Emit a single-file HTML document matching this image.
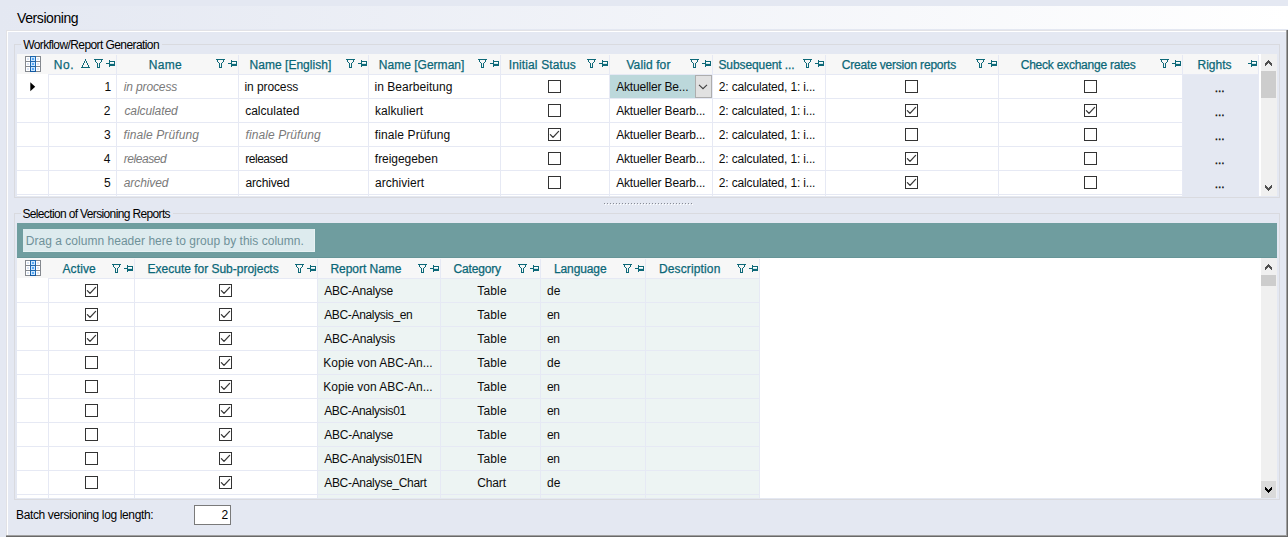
<!DOCTYPE html>
<html><head><meta charset="utf-8"><title>Versioning</title>
<style>
html,body{margin:0;padding:0;}
body{width:1288px;height:537px;overflow:hidden;background:#E4E8F2;position:relative;font-family:"Liberation Sans",sans-serif;}
div,svg.i,span.t{position:absolute;}
span.t{line-height:20px;white-space:pre;}
svg.i{display:block;overflow:visible;}
</style></head><body>
<div style="left:0px;top:6px;width:1288px;height:23px;background:linear-gradient(to right,#E4E8F2 0%,#FFFFFF 100%);"></div>
<div style="left:6px;top:30px;width:1280px;height:1px;background:#E2E2E6;"></div>
<div style="left:6px;top:30px;width:1px;height:506px;background:#E2E2E6;"></div>
<div style="left:7px;top:31px;width:1279px;height:1px;background:#FFFFFF;"></div>
<div style="left:7px;top:31px;width:1px;height:504px;background:#FFFFFF;"></div>
<div style="left:1286px;top:30px;width:1px;height:507px;background:#A0A0A0;"></div>
<div style="left:1287px;top:30px;width:1px;height:507px;background:#696969;"></div>
<div style="left:6px;top:535px;width:1281px;height:1px;background:#A0A0A0;"></div>
<div style="left:6px;top:536px;width:1282px;height:1px;background:#696969;"></div>
<div style="left:14px;top:44px;width:7px;height:1px;background:#D9DADF;"></div>
<div style="left:162px;top:44px;width:1118px;height:1px;background:#D9DADF;"></div>
<div style="left:14px;top:44px;width:1px;height:154px;background:#D9DADF;"></div>
<div style="left:1279px;top:44px;width:1px;height:154px;background:#D9DADF;"></div>
<div style="left:14px;top:197px;width:1266px;height:1px;background:#D9DADF;"></div>
<div style="left:14px;top:213px;width:7px;height:1px;background:#D9DADF;"></div>
<div style="left:173px;top:213px;width:1107px;height:1px;background:#D9DADF;"></div>
<div style="left:14px;top:213px;width:1px;height:287px;background:#D9DADF;"></div>
<div style="left:1279px;top:213px;width:1px;height:287px;background:#D9DADF;"></div>
<div style="left:14px;top:499px;width:1266px;height:1px;background:#D9DADF;"></div>
<div style="left:17px;top:54px;width:1244px;height:142px;background:#FFFFFF;"></div>
<div style="left:17px;top:54px;width:1241px;height:20px;background:#F7F7F7;"></div>
<div style="left:48px;top:74px;width:1210px;height:1px;background:#E6E9F4;"></div>
<div style="left:17px;top:98px;width:1241px;height:1px;background:#E6E9F4;"></div>
<div style="left:17px;top:122px;width:1241px;height:1px;background:#E6E9F4;"></div>
<div style="left:17px;top:146px;width:1241px;height:1px;background:#E6E9F4;"></div>
<div style="left:17px;top:170px;width:1241px;height:1px;background:#E6E9F4;"></div>
<div style="left:17px;top:194px;width:1241px;height:1px;background:#E6E9F4;"></div>
<div style="left:1183px;top:75px;width:76px;height:121px;background:#E4E8F2;"></div>
<div style="left:48px;top:75px;width:1px;height:121px;background:#E6E9F4;"></div>
<div style="left:116px;top:55px;width:1px;height:141px;background:#E6E9F4;"></div>
<div style="left:238px;top:55px;width:1px;height:141px;background:#E6E9F4;"></div>
<div style="left:368px;top:55px;width:1px;height:141px;background:#E6E9F4;"></div>
<div style="left:500px;top:55px;width:1px;height:141px;background:#E6E9F4;"></div>
<div style="left:609px;top:55px;width:1px;height:141px;background:#E6E9F4;"></div>
<div style="left:712px;top:55px;width:1px;height:141px;background:#E6E9F4;"></div>
<div style="left:825px;top:55px;width:1px;height:141px;background:#E6E9F4;"></div>
<div style="left:998px;top:55px;width:1px;height:141px;background:#E6E9F4;"></div>
<div style="left:1182px;top:55px;width:1px;height:141px;background:#E6E9F4;"></div>
<div style="left:1258px;top:55px;width:1px;height:141px;background:#E6E9F4;"></div>
<div style="left:610px;top:75px;width:85px;height:23px;background:#BCD8DB;"></div>
<div style="left:695px;top:75px;width:17px;height:23px;background:#E1E1E1;border:1px solid #ADADAD;box-sizing:border-box;"></div>
<svg class="i" style="left:698px;top:83px" width="10" height="7" viewBox="0 0 10 7"><polyline points="1,1.8 5,5.7 9,1.8" fill="none" stroke="#404040" stroke-width="1.1"/></svg>
<svg class="i" style="left:30px;top:82px" width="6" height="10" viewBox="0 0 6 10"><path d="M0.3 0.3L5.2 4.75L0.3 9.2z" fill="#000"/></svg>
<svg class="i" style="left:25px;top:56px" width="16" height="16" viewBox="0 0 16 16" shape-rendering="crispEdges"><rect x="0" y="0" width="16" height="16" fill="#fff"/><rect x="2" y="2" width="2" height="2" fill="#DCE6F5"/><rect x="2" y="7" width="2" height="2" fill="#DCE6F5"/><rect x="2" y="12" width="2" height="2" fill="#DCE6F5"/><rect x="12" y="2" width="2" height="2" fill="#DCE6F5"/><rect x="12" y="7" width="2" height="2" fill="#DCE6F5"/><rect x="12" y="12" width="2" height="2" fill="#DCE6F5"/><rect x="0" y="0" width="1" height="16" fill="#85898F"/><rect x="0" y="0" width="16" height="1" fill="#85898F"/><rect x="5" y="0" width="1" height="16" fill="#85898F"/><rect x="0" y="5" width="16" height="1" fill="#85898F"/><rect x="10" y="0" width="1" height="16" fill="#85898F"/><rect x="0" y="10" width="16" height="1" fill="#85898F"/><rect x="15" y="0" width="1" height="16" fill="#85898F"/><rect x="0" y="15" width="16" height="1" fill="#85898F"/><rect x="5" y="0" width="6" height="16" fill="#1B66AE"/><rect x="6" y="1" width="4" height="4" fill="#CDE6FD"/><rect x="7" y="2" width="2" height="2" fill="#5AAAF7"/><rect x="6" y="6" width="4" height="4" fill="#CDE6FD"/><rect x="7" y="7" width="2" height="2" fill="#5AAAF7"/><rect x="6" y="11" width="4" height="4" fill="#CDE6FD"/><rect x="7" y="12" width="2" height="2" fill="#5AAAF7"/><rect x="5" y="14" width="6" height="2" fill="#0E4F98" opacity=".6"/><rect x="6" y="11" width="4" height="4" fill="#CDE6FD"/><rect x="7" y="12" width="2" height="2" fill="#5AAAF7"/></svg>
<svg class="i" style="left:81px;top:59px" width="9" height="9" viewBox="0 0 9 9" shape-rendering="crispEdges"><path fill="#0D6878" d="M4 0h1v2h-1zM3 2h1v2h-1zM5 2h1v2h-1zM2 4h1v2h-1zM6 4h1v2h-1zM1 6h1v2h-1zM7 6h1v2h-1zM0 8h9v1h-9z"/></svg>
<svg class="i" style="left:94px;top:59px" width="9" height="9" viewBox="0 0 9 9" shape-rendering="crispEdges"><path fill="#0D6878" d="M0 0h9v1h-9zM1 1h1v2h-1zM7 1h1v2h-1zM2 3h1v1h-1zM6 3h1v1h-1zM3 4h1v5h-1zM5 4h1v5h-1zM4 8h1v1h-1z"/></svg>
<svg class="i" style="left:106px;top:60px" width="9" height="7" viewBox="0 0 9 7" shape-rendering="crispEdges"><path fill="#0D6878" d="M0 3h3v1h-3zM3 0h1v7h-1zM4 1h5v1h-5zM8 2h1v2h-1zM4 4h5v2h-5z"/><path fill="#FFFFFF" d="M4 2h4v1h-4z"/><path fill="#D2E9EC" d="M4 3h4v1h-4z"/></svg>
<svg class="i" style="left:216px;top:59px" width="9" height="9" viewBox="0 0 9 9" shape-rendering="crispEdges"><path fill="#0D6878" d="M0 0h9v1h-9zM1 1h1v2h-1zM7 1h1v2h-1zM2 3h1v1h-1zM6 3h1v1h-1zM3 4h1v5h-1zM5 4h1v5h-1zM4 8h1v1h-1z"/></svg>
<svg class="i" style="left:228px;top:60px" width="9" height="7" viewBox="0 0 9 7" shape-rendering="crispEdges"><path fill="#0D6878" d="M0 3h3v1h-3zM3 0h1v7h-1zM4 1h5v1h-5zM8 2h1v2h-1zM4 4h5v2h-5z"/><path fill="#FFFFFF" d="M4 2h4v1h-4z"/><path fill="#D2E9EC" d="M4 3h4v1h-4z"/></svg>
<svg class="i" style="left:346px;top:59px" width="9" height="9" viewBox="0 0 9 9" shape-rendering="crispEdges"><path fill="#0D6878" d="M0 0h9v1h-9zM1 1h1v2h-1zM7 1h1v2h-1zM2 3h1v1h-1zM6 3h1v1h-1zM3 4h1v5h-1zM5 4h1v5h-1zM4 8h1v1h-1z"/></svg>
<svg class="i" style="left:358px;top:60px" width="9" height="7" viewBox="0 0 9 7" shape-rendering="crispEdges"><path fill="#0D6878" d="M0 3h3v1h-3zM3 0h1v7h-1zM4 1h5v1h-5zM8 2h1v2h-1zM4 4h5v2h-5z"/><path fill="#FFFFFF" d="M4 2h4v1h-4z"/><path fill="#D2E9EC" d="M4 3h4v1h-4z"/></svg>
<svg class="i" style="left:478px;top:59px" width="9" height="9" viewBox="0 0 9 9" shape-rendering="crispEdges"><path fill="#0D6878" d="M0 0h9v1h-9zM1 1h1v2h-1zM7 1h1v2h-1zM2 3h1v1h-1zM6 3h1v1h-1zM3 4h1v5h-1zM5 4h1v5h-1zM4 8h1v1h-1z"/></svg>
<svg class="i" style="left:490px;top:60px" width="9" height="7" viewBox="0 0 9 7" shape-rendering="crispEdges"><path fill="#0D6878" d="M0 3h3v1h-3zM3 0h1v7h-1zM4 1h5v1h-5zM8 2h1v2h-1zM4 4h5v2h-5z"/><path fill="#FFFFFF" d="M4 2h4v1h-4z"/><path fill="#D2E9EC" d="M4 3h4v1h-4z"/></svg>
<svg class="i" style="left:587px;top:59px" width="9" height="9" viewBox="0 0 9 9" shape-rendering="crispEdges"><path fill="#0D6878" d="M0 0h9v1h-9zM1 1h1v2h-1zM7 1h1v2h-1zM2 3h1v1h-1zM6 3h1v1h-1zM3 4h1v5h-1zM5 4h1v5h-1zM4 8h1v1h-1z"/></svg>
<svg class="i" style="left:599px;top:60px" width="9" height="7" viewBox="0 0 9 7" shape-rendering="crispEdges"><path fill="#0D6878" d="M0 3h3v1h-3zM3 0h1v7h-1zM4 1h5v1h-5zM8 2h1v2h-1zM4 4h5v2h-5z"/><path fill="#FFFFFF" d="M4 2h4v1h-4z"/><path fill="#D2E9EC" d="M4 3h4v1h-4z"/></svg>
<svg class="i" style="left:690px;top:59px" width="9" height="9" viewBox="0 0 9 9" shape-rendering="crispEdges"><path fill="#0D6878" d="M0 0h9v1h-9zM1 1h1v2h-1zM7 1h1v2h-1zM2 3h1v1h-1zM6 3h1v1h-1zM3 4h1v5h-1zM5 4h1v5h-1zM4 8h1v1h-1z"/></svg>
<svg class="i" style="left:702px;top:60px" width="9" height="7" viewBox="0 0 9 7" shape-rendering="crispEdges"><path fill="#0D6878" d="M0 3h3v1h-3zM3 0h1v7h-1zM4 1h5v1h-5zM8 2h1v2h-1zM4 4h5v2h-5z"/><path fill="#FFFFFF" d="M4 2h4v1h-4z"/><path fill="#D2E9EC" d="M4 3h4v1h-4z"/></svg>
<svg class="i" style="left:803px;top:59px" width="9" height="9" viewBox="0 0 9 9" shape-rendering="crispEdges"><path fill="#0D6878" d="M0 0h9v1h-9zM1 1h1v2h-1zM7 1h1v2h-1zM2 3h1v1h-1zM6 3h1v1h-1zM3 4h1v5h-1zM5 4h1v5h-1zM4 8h1v1h-1z"/></svg>
<svg class="i" style="left:815px;top:60px" width="9" height="7" viewBox="0 0 9 7" shape-rendering="crispEdges"><path fill="#0D6878" d="M0 3h3v1h-3zM3 0h1v7h-1zM4 1h5v1h-5zM8 2h1v2h-1zM4 4h5v2h-5z"/><path fill="#FFFFFF" d="M4 2h4v1h-4z"/><path fill="#D2E9EC" d="M4 3h4v1h-4z"/></svg>
<svg class="i" style="left:976px;top:59px" width="9" height="9" viewBox="0 0 9 9" shape-rendering="crispEdges"><path fill="#0D6878" d="M0 0h9v1h-9zM1 1h1v2h-1zM7 1h1v2h-1zM2 3h1v1h-1zM6 3h1v1h-1zM3 4h1v5h-1zM5 4h1v5h-1zM4 8h1v1h-1z"/></svg>
<svg class="i" style="left:988px;top:60px" width="9" height="7" viewBox="0 0 9 7" shape-rendering="crispEdges"><path fill="#0D6878" d="M0 3h3v1h-3zM3 0h1v7h-1zM4 1h5v1h-5zM8 2h1v2h-1zM4 4h5v2h-5z"/><path fill="#FFFFFF" d="M4 2h4v1h-4z"/><path fill="#D2E9EC" d="M4 3h4v1h-4z"/></svg>
<svg class="i" style="left:1160px;top:59px" width="9" height="9" viewBox="0 0 9 9" shape-rendering="crispEdges"><path fill="#0D6878" d="M0 0h9v1h-9zM1 1h1v2h-1zM7 1h1v2h-1zM2 3h1v1h-1zM6 3h1v1h-1zM3 4h1v5h-1zM5 4h1v5h-1zM4 8h1v1h-1z"/></svg>
<svg class="i" style="left:1172px;top:60px" width="9" height="7" viewBox="0 0 9 7" shape-rendering="crispEdges"><path fill="#0D6878" d="M0 3h3v1h-3zM3 0h1v7h-1zM4 1h5v1h-5zM8 2h1v2h-1zM4 4h5v2h-5z"/><path fill="#FFFFFF" d="M4 2h4v1h-4z"/><path fill="#D2E9EC" d="M4 3h4v1h-4z"/></svg>
<svg class="i" style="left:1248px;top:60px" width="9" height="7" viewBox="0 0 9 7" shape-rendering="crispEdges"><path fill="#0D6878" d="M0 3h3v1h-3zM3 0h1v7h-1zM4 1h5v1h-5zM8 2h1v2h-1zM4 4h5v2h-5z"/><path fill="#FFFFFF" d="M4 2h4v1h-4z"/><path fill="#D2E9EC" d="M4 3h4v1h-4z"/></svg>
<svg class="i" style="left:548px;top:80px" width="13" height="13" viewBox="0 0 13 13"><rect x=".5" y=".5" width="12" height="12" fill="#fff" stroke="#333" stroke-width="1" shape-rendering="crispEdges"/></svg>
<svg class="i" style="left:905px;top:80px" width="13" height="13" viewBox="0 0 13 13"><rect x=".5" y=".5" width="12" height="12" fill="#fff" stroke="#333" stroke-width="1" shape-rendering="crispEdges"/></svg>
<svg class="i" style="left:1084px;top:80px" width="13" height="13" viewBox="0 0 13 13"><rect x=".5" y=".5" width="12" height="12" fill="#fff" stroke="#333" stroke-width="1" shape-rendering="crispEdges"/></svg>
<svg class="i" style="left:548px;top:104px" width="13" height="13" viewBox="0 0 13 13"><rect x=".5" y=".5" width="12" height="12" fill="#fff" stroke="#333" stroke-width="1" shape-rendering="crispEdges"/></svg>
<svg class="i" style="left:905px;top:104px" width="13" height="13" viewBox="0 0 13 13"><rect x=".5" y=".5" width="12" height="12" fill="#fff" stroke="#333" stroke-width="1" shape-rendering="crispEdges"/><polyline points="2.4,6.6 5,9.35 10.6,3.4" fill="none" stroke="#383838" stroke-width="1.3" stroke-linecap="round" stroke-linejoin="round"/></svg>
<svg class="i" style="left:1084px;top:104px" width="13" height="13" viewBox="0 0 13 13"><rect x=".5" y=".5" width="12" height="12" fill="#fff" stroke="#333" stroke-width="1" shape-rendering="crispEdges"/><polyline points="2.4,6.6 5,9.35 10.6,3.4" fill="none" stroke="#383838" stroke-width="1.3" stroke-linecap="round" stroke-linejoin="round"/></svg>
<svg class="i" style="left:548px;top:128px" width="13" height="13" viewBox="0 0 13 13"><rect x=".5" y=".5" width="12" height="12" fill="#fff" stroke="#333" stroke-width="1" shape-rendering="crispEdges"/><polyline points="2.4,6.6 5,9.35 10.6,3.4" fill="none" stroke="#383838" stroke-width="1.3" stroke-linecap="round" stroke-linejoin="round"/></svg>
<svg class="i" style="left:905px;top:128px" width="13" height="13" viewBox="0 0 13 13"><rect x=".5" y=".5" width="12" height="12" fill="#fff" stroke="#333" stroke-width="1" shape-rendering="crispEdges"/></svg>
<svg class="i" style="left:1084px;top:128px" width="13" height="13" viewBox="0 0 13 13"><rect x=".5" y=".5" width="12" height="12" fill="#fff" stroke="#333" stroke-width="1" shape-rendering="crispEdges"/></svg>
<svg class="i" style="left:548px;top:152px" width="13" height="13" viewBox="0 0 13 13"><rect x=".5" y=".5" width="12" height="12" fill="#fff" stroke="#333" stroke-width="1" shape-rendering="crispEdges"/></svg>
<svg class="i" style="left:905px;top:152px" width="13" height="13" viewBox="0 0 13 13"><rect x=".5" y=".5" width="12" height="12" fill="#fff" stroke="#333" stroke-width="1" shape-rendering="crispEdges"/><polyline points="2.4,6.6 5,9.35 10.6,3.4" fill="none" stroke="#383838" stroke-width="1.3" stroke-linecap="round" stroke-linejoin="round"/></svg>
<svg class="i" style="left:1084px;top:152px" width="13" height="13" viewBox="0 0 13 13"><rect x=".5" y=".5" width="12" height="12" fill="#fff" stroke="#333" stroke-width="1" shape-rendering="crispEdges"/></svg>
<svg class="i" style="left:548px;top:176px" width="13" height="13" viewBox="0 0 13 13"><rect x=".5" y=".5" width="12" height="12" fill="#fff" stroke="#333" stroke-width="1" shape-rendering="crispEdges"/></svg>
<svg class="i" style="left:905px;top:176px" width="13" height="13" viewBox="0 0 13 13"><rect x=".5" y=".5" width="12" height="12" fill="#fff" stroke="#333" stroke-width="1" shape-rendering="crispEdges"/><polyline points="2.4,6.6 5,9.35 10.6,3.4" fill="none" stroke="#383838" stroke-width="1.3" stroke-linecap="round" stroke-linejoin="round"/></svg>
<svg class="i" style="left:1084px;top:176px" width="13" height="13" viewBox="0 0 13 13"><rect x=".5" y=".5" width="12" height="12" fill="#fff" stroke="#333" stroke-width="1" shape-rendering="crispEdges"/></svg>
<div style="left:1261px;top:54px;width:16px;height:142px;background:#F0F0F0;"></div>
<div style="left:1261px;top:71px;width:15px;height:27px;background:#CDCDCD;"></div>
<svg class="i" style="left:1265px;top:60px" width="7" height="6" viewBox="0 0 7 6" shape-rendering="crispEdges"><path fill="#505050" d="M3 0h1v1h-1zM2 1h3v1h-3zM1 2h5v1h-5zM0 3h3v1h-3zM4 3h3v1h-3zM0 4h2v1h-2zM5 4h2v1h-2zM0 5h1v1h-1zM6 5h1v1h-1z"/></svg>
<svg class="i" style="left:1265px;top:185px" width="7" height="6" viewBox="0 0 7 6" shape-rendering="crispEdges"><path fill="#505050" d="M3 5h1v1h-1zM2 4h3v1h-3zM1 3h5v1h-5zM0 2h3v1h-3zM4 2h3v1h-3zM0 1h2v1h-2zM5 1h2v1h-2zM0 0h1v1h-1zM6 0h1v1h-1z"/></svg>
<div style="left:604px;top:203px;width:1px;height:1px;background:#8A8D96;"></div>
<div style="left:605px;top:204px;width:1px;height:1px;background:#FFFFFF;"></div>
<div style="left:607px;top:203px;width:1px;height:1px;background:#8A8D96;"></div>
<div style="left:608px;top:204px;width:1px;height:1px;background:#FFFFFF;"></div>
<div style="left:610px;top:203px;width:1px;height:1px;background:#8A8D96;"></div>
<div style="left:611px;top:204px;width:1px;height:1px;background:#FFFFFF;"></div>
<div style="left:613px;top:203px;width:1px;height:1px;background:#8A8D96;"></div>
<div style="left:614px;top:204px;width:1px;height:1px;background:#FFFFFF;"></div>
<div style="left:616px;top:203px;width:1px;height:1px;background:#8A8D96;"></div>
<div style="left:617px;top:204px;width:1px;height:1px;background:#FFFFFF;"></div>
<div style="left:619px;top:203px;width:1px;height:1px;background:#8A8D96;"></div>
<div style="left:620px;top:204px;width:1px;height:1px;background:#FFFFFF;"></div>
<div style="left:622px;top:203px;width:1px;height:1px;background:#8A8D96;"></div>
<div style="left:623px;top:204px;width:1px;height:1px;background:#FFFFFF;"></div>
<div style="left:625px;top:203px;width:1px;height:1px;background:#8A8D96;"></div>
<div style="left:626px;top:204px;width:1px;height:1px;background:#FFFFFF;"></div>
<div style="left:628px;top:203px;width:1px;height:1px;background:#8A8D96;"></div>
<div style="left:629px;top:204px;width:1px;height:1px;background:#FFFFFF;"></div>
<div style="left:631px;top:203px;width:1px;height:1px;background:#8A8D96;"></div>
<div style="left:632px;top:204px;width:1px;height:1px;background:#FFFFFF;"></div>
<div style="left:634px;top:203px;width:1px;height:1px;background:#8A8D96;"></div>
<div style="left:635px;top:204px;width:1px;height:1px;background:#FFFFFF;"></div>
<div style="left:637px;top:203px;width:1px;height:1px;background:#8A8D96;"></div>
<div style="left:638px;top:204px;width:1px;height:1px;background:#FFFFFF;"></div>
<div style="left:640px;top:203px;width:1px;height:1px;background:#8A8D96;"></div>
<div style="left:641px;top:204px;width:1px;height:1px;background:#FFFFFF;"></div>
<div style="left:643px;top:203px;width:1px;height:1px;background:#8A8D96;"></div>
<div style="left:644px;top:204px;width:1px;height:1px;background:#FFFFFF;"></div>
<div style="left:646px;top:203px;width:1px;height:1px;background:#8A8D96;"></div>
<div style="left:647px;top:204px;width:1px;height:1px;background:#FFFFFF;"></div>
<div style="left:649px;top:203px;width:1px;height:1px;background:#8A8D96;"></div>
<div style="left:650px;top:204px;width:1px;height:1px;background:#FFFFFF;"></div>
<div style="left:652px;top:203px;width:1px;height:1px;background:#8A8D96;"></div>
<div style="left:653px;top:204px;width:1px;height:1px;background:#FFFFFF;"></div>
<div style="left:655px;top:203px;width:1px;height:1px;background:#8A8D96;"></div>
<div style="left:656px;top:204px;width:1px;height:1px;background:#FFFFFF;"></div>
<div style="left:658px;top:203px;width:1px;height:1px;background:#8A8D96;"></div>
<div style="left:659px;top:204px;width:1px;height:1px;background:#FFFFFF;"></div>
<div style="left:661px;top:203px;width:1px;height:1px;background:#8A8D96;"></div>
<div style="left:662px;top:204px;width:1px;height:1px;background:#FFFFFF;"></div>
<div style="left:664px;top:203px;width:1px;height:1px;background:#8A8D96;"></div>
<div style="left:665px;top:204px;width:1px;height:1px;background:#FFFFFF;"></div>
<div style="left:667px;top:203px;width:1px;height:1px;background:#8A8D96;"></div>
<div style="left:668px;top:204px;width:1px;height:1px;background:#FFFFFF;"></div>
<div style="left:670px;top:203px;width:1px;height:1px;background:#8A8D96;"></div>
<div style="left:671px;top:204px;width:1px;height:1px;background:#FFFFFF;"></div>
<div style="left:673px;top:203px;width:1px;height:1px;background:#8A8D96;"></div>
<div style="left:674px;top:204px;width:1px;height:1px;background:#FFFFFF;"></div>
<div style="left:676px;top:203px;width:1px;height:1px;background:#8A8D96;"></div>
<div style="left:677px;top:204px;width:1px;height:1px;background:#FFFFFF;"></div>
<div style="left:679px;top:203px;width:1px;height:1px;background:#8A8D96;"></div>
<div style="left:680px;top:204px;width:1px;height:1px;background:#FFFFFF;"></div>
<div style="left:682px;top:203px;width:1px;height:1px;background:#8A8D96;"></div>
<div style="left:683px;top:204px;width:1px;height:1px;background:#FFFFFF;"></div>
<div style="left:685px;top:203px;width:1px;height:1px;background:#8A8D96;"></div>
<div style="left:686px;top:204px;width:1px;height:1px;background:#FFFFFF;"></div>
<div style="left:688px;top:203px;width:1px;height:1px;background:#8A8D96;"></div>
<div style="left:689px;top:204px;width:1px;height:1px;background:#FFFFFF;"></div>
<div style="left:691px;top:203px;width:1px;height:1px;background:#8A8D96;"></div>
<div style="left:692px;top:204px;width:1px;height:1px;background:#FFFFFF;"></div>
<div style="left:17px;top:223px;width:1260px;height:35px;background:#6F9D9F;"></div>
<div style="left:17px;top:257px;width:1260px;height:1px;background:#669597;"></div>
<div style="left:23px;top:229px;width:292px;height:23px;background:#DDEBEE;border-right:1px solid #E8F2F3;border-bottom:1px solid #E8F2F3;box-sizing:border-box;"></div>
<div style="left:17px;top:258px;width:1244px;height:240px;background:#FFFFFF;"></div>
<div style="left:17px;top:258px;width:743px;height:20px;background:#F7F7F7;"></div>
<div style="left:318px;top:279px;width:441px;height:219px;background:#EDF4F3;"></div>
<div style="left:48px;top:278px;width:712px;height:1px;background:#E6E9F4;"></div>
<div style="left:17px;top:302px;width:743px;height:1px;background:#E6E9F4;"></div>
<div style="left:17px;top:326px;width:743px;height:1px;background:#E6E9F4;"></div>
<div style="left:17px;top:350px;width:743px;height:1px;background:#E6E9F4;"></div>
<div style="left:17px;top:374px;width:743px;height:1px;background:#E6E9F4;"></div>
<div style="left:17px;top:398px;width:743px;height:1px;background:#E6E9F4;"></div>
<div style="left:17px;top:422px;width:743px;height:1px;background:#E6E9F4;"></div>
<div style="left:17px;top:446px;width:743px;height:1px;background:#E6E9F4;"></div>
<div style="left:17px;top:470px;width:743px;height:1px;background:#E6E9F4;"></div>
<div style="left:17px;top:494px;width:743px;height:1px;background:#E6E9F4;"></div>
<div style="left:48px;top:279px;width:1px;height:219px;background:#E6E9F4;"></div>
<div style="left:134px;top:259px;width:1px;height:239px;background:#E6E9F4;"></div>
<div style="left:317px;top:259px;width:1px;height:239px;background:#E6E9F4;"></div>
<div style="left:440px;top:259px;width:1px;height:239px;background:#E6E9F4;"></div>
<div style="left:540px;top:259px;width:1px;height:239px;background:#E6E9F4;"></div>
<div style="left:645px;top:259px;width:1px;height:239px;background:#E6E9F4;"></div>
<div style="left:759px;top:259px;width:1px;height:239px;background:#E6E9F4;"></div>
<svg class="i" style="left:25px;top:260px" width="16" height="16" viewBox="0 0 16 16" shape-rendering="crispEdges"><rect x="0" y="0" width="16" height="16" fill="#fff"/><rect x="2" y="2" width="2" height="2" fill="#DCE6F5"/><rect x="2" y="7" width="2" height="2" fill="#DCE6F5"/><rect x="2" y="12" width="2" height="2" fill="#DCE6F5"/><rect x="12" y="2" width="2" height="2" fill="#DCE6F5"/><rect x="12" y="7" width="2" height="2" fill="#DCE6F5"/><rect x="12" y="12" width="2" height="2" fill="#DCE6F5"/><rect x="0" y="0" width="1" height="16" fill="#85898F"/><rect x="0" y="0" width="16" height="1" fill="#85898F"/><rect x="5" y="0" width="1" height="16" fill="#85898F"/><rect x="0" y="5" width="16" height="1" fill="#85898F"/><rect x="10" y="0" width="1" height="16" fill="#85898F"/><rect x="0" y="10" width="16" height="1" fill="#85898F"/><rect x="15" y="0" width="1" height="16" fill="#85898F"/><rect x="0" y="15" width="16" height="1" fill="#85898F"/><rect x="5" y="0" width="6" height="16" fill="#1B66AE"/><rect x="6" y="1" width="4" height="4" fill="#CDE6FD"/><rect x="7" y="2" width="2" height="2" fill="#5AAAF7"/><rect x="6" y="6" width="4" height="4" fill="#CDE6FD"/><rect x="7" y="7" width="2" height="2" fill="#5AAAF7"/><rect x="6" y="11" width="4" height="4" fill="#CDE6FD"/><rect x="7" y="12" width="2" height="2" fill="#5AAAF7"/><rect x="5" y="14" width="6" height="2" fill="#0E4F98" opacity=".6"/><rect x="6" y="11" width="4" height="4" fill="#CDE6FD"/><rect x="7" y="12" width="2" height="2" fill="#5AAAF7"/></svg>
<svg class="i" style="left:112px;top:264px" width="9" height="9" viewBox="0 0 9 9" shape-rendering="crispEdges"><path fill="#0D6878" d="M0 0h9v1h-9zM1 1h1v2h-1zM7 1h1v2h-1zM2 3h1v1h-1zM6 3h1v1h-1zM3 4h1v5h-1zM5 4h1v5h-1zM4 8h1v1h-1z"/></svg>
<svg class="i" style="left:124px;top:265px" width="9" height="7" viewBox="0 0 9 7" shape-rendering="crispEdges"><path fill="#0D6878" d="M0 3h3v1h-3zM3 0h1v7h-1zM4 1h5v1h-5zM8 2h1v2h-1zM4 4h5v2h-5z"/><path fill="#FFFFFF" d="M4 2h4v1h-4z"/><path fill="#D2E9EC" d="M4 3h4v1h-4z"/></svg>
<svg class="i" style="left:295px;top:264px" width="9" height="9" viewBox="0 0 9 9" shape-rendering="crispEdges"><path fill="#0D6878" d="M0 0h9v1h-9zM1 1h1v2h-1zM7 1h1v2h-1zM2 3h1v1h-1zM6 3h1v1h-1zM3 4h1v5h-1zM5 4h1v5h-1zM4 8h1v1h-1z"/></svg>
<svg class="i" style="left:307px;top:265px" width="9" height="7" viewBox="0 0 9 7" shape-rendering="crispEdges"><path fill="#0D6878" d="M0 3h3v1h-3zM3 0h1v7h-1zM4 1h5v1h-5zM8 2h1v2h-1zM4 4h5v2h-5z"/><path fill="#FFFFFF" d="M4 2h4v1h-4z"/><path fill="#D2E9EC" d="M4 3h4v1h-4z"/></svg>
<svg class="i" style="left:418px;top:264px" width="9" height="9" viewBox="0 0 9 9" shape-rendering="crispEdges"><path fill="#0D6878" d="M0 0h9v1h-9zM1 1h1v2h-1zM7 1h1v2h-1zM2 3h1v1h-1zM6 3h1v1h-1zM3 4h1v5h-1zM5 4h1v5h-1zM4 8h1v1h-1z"/></svg>
<svg class="i" style="left:430px;top:265px" width="9" height="7" viewBox="0 0 9 7" shape-rendering="crispEdges"><path fill="#0D6878" d="M0 3h3v1h-3zM3 0h1v7h-1zM4 1h5v1h-5zM8 2h1v2h-1zM4 4h5v2h-5z"/><path fill="#FFFFFF" d="M4 2h4v1h-4z"/><path fill="#D2E9EC" d="M4 3h4v1h-4z"/></svg>
<svg class="i" style="left:518px;top:264px" width="9" height="9" viewBox="0 0 9 9" shape-rendering="crispEdges"><path fill="#0D6878" d="M0 0h9v1h-9zM1 1h1v2h-1zM7 1h1v2h-1zM2 3h1v1h-1zM6 3h1v1h-1zM3 4h1v5h-1zM5 4h1v5h-1zM4 8h1v1h-1z"/></svg>
<svg class="i" style="left:530px;top:265px" width="9" height="7" viewBox="0 0 9 7" shape-rendering="crispEdges"><path fill="#0D6878" d="M0 3h3v1h-3zM3 0h1v7h-1zM4 1h5v1h-5zM8 2h1v2h-1zM4 4h5v2h-5z"/><path fill="#FFFFFF" d="M4 2h4v1h-4z"/><path fill="#D2E9EC" d="M4 3h4v1h-4z"/></svg>
<svg class="i" style="left:623px;top:264px" width="9" height="9" viewBox="0 0 9 9" shape-rendering="crispEdges"><path fill="#0D6878" d="M0 0h9v1h-9zM1 1h1v2h-1zM7 1h1v2h-1zM2 3h1v1h-1zM6 3h1v1h-1zM3 4h1v5h-1zM5 4h1v5h-1zM4 8h1v1h-1z"/></svg>
<svg class="i" style="left:635px;top:265px" width="9" height="7" viewBox="0 0 9 7" shape-rendering="crispEdges"><path fill="#0D6878" d="M0 3h3v1h-3zM3 0h1v7h-1zM4 1h5v1h-5zM8 2h1v2h-1zM4 4h5v2h-5z"/><path fill="#FFFFFF" d="M4 2h4v1h-4z"/><path fill="#D2E9EC" d="M4 3h4v1h-4z"/></svg>
<svg class="i" style="left:737px;top:264px" width="9" height="9" viewBox="0 0 9 9" shape-rendering="crispEdges"><path fill="#0D6878" d="M0 0h9v1h-9zM1 1h1v2h-1zM7 1h1v2h-1zM2 3h1v1h-1zM6 3h1v1h-1zM3 4h1v5h-1zM5 4h1v5h-1zM4 8h1v1h-1z"/></svg>
<svg class="i" style="left:749px;top:265px" width="9" height="7" viewBox="0 0 9 7" shape-rendering="crispEdges"><path fill="#0D6878" d="M0 3h3v1h-3zM3 0h1v7h-1zM4 1h5v1h-5zM8 2h1v2h-1zM4 4h5v2h-5z"/><path fill="#FFFFFF" d="M4 2h4v1h-4z"/><path fill="#D2E9EC" d="M4 3h4v1h-4z"/></svg>
<svg class="i" style="left:85px;top:284px" width="13" height="13" viewBox="0 0 13 13"><rect x=".5" y=".5" width="12" height="12" fill="#fff" stroke="#333" stroke-width="1" shape-rendering="crispEdges"/><polyline points="2.4,6.6 5,9.35 10.6,3.4" fill="none" stroke="#383838" stroke-width="1.3" stroke-linecap="round" stroke-linejoin="round"/></svg>
<svg class="i" style="left:219px;top:284px" width="13" height="13" viewBox="0 0 13 13"><rect x=".5" y=".5" width="12" height="12" fill="#fff" stroke="#333" stroke-width="1" shape-rendering="crispEdges"/><polyline points="2.4,6.6 5,9.35 10.6,3.4" fill="none" stroke="#383838" stroke-width="1.3" stroke-linecap="round" stroke-linejoin="round"/></svg>
<svg class="i" style="left:85px;top:308px" width="13" height="13" viewBox="0 0 13 13"><rect x=".5" y=".5" width="12" height="12" fill="#fff" stroke="#333" stroke-width="1" shape-rendering="crispEdges"/><polyline points="2.4,6.6 5,9.35 10.6,3.4" fill="none" stroke="#383838" stroke-width="1.3" stroke-linecap="round" stroke-linejoin="round"/></svg>
<svg class="i" style="left:219px;top:308px" width="13" height="13" viewBox="0 0 13 13"><rect x=".5" y=".5" width="12" height="12" fill="#fff" stroke="#333" stroke-width="1" shape-rendering="crispEdges"/><polyline points="2.4,6.6 5,9.35 10.6,3.4" fill="none" stroke="#383838" stroke-width="1.3" stroke-linecap="round" stroke-linejoin="round"/></svg>
<svg class="i" style="left:85px;top:332px" width="13" height="13" viewBox="0 0 13 13"><rect x=".5" y=".5" width="12" height="12" fill="#fff" stroke="#333" stroke-width="1" shape-rendering="crispEdges"/><polyline points="2.4,6.6 5,9.35 10.6,3.4" fill="none" stroke="#383838" stroke-width="1.3" stroke-linecap="round" stroke-linejoin="round"/></svg>
<svg class="i" style="left:219px;top:332px" width="13" height="13" viewBox="0 0 13 13"><rect x=".5" y=".5" width="12" height="12" fill="#fff" stroke="#333" stroke-width="1" shape-rendering="crispEdges"/><polyline points="2.4,6.6 5,9.35 10.6,3.4" fill="none" stroke="#383838" stroke-width="1.3" stroke-linecap="round" stroke-linejoin="round"/></svg>
<svg class="i" style="left:85px;top:356px" width="13" height="13" viewBox="0 0 13 13"><rect x=".5" y=".5" width="12" height="12" fill="#fff" stroke="#333" stroke-width="1" shape-rendering="crispEdges"/></svg>
<svg class="i" style="left:219px;top:356px" width="13" height="13" viewBox="0 0 13 13"><rect x=".5" y=".5" width="12" height="12" fill="#fff" stroke="#333" stroke-width="1" shape-rendering="crispEdges"/><polyline points="2.4,6.6 5,9.35 10.6,3.4" fill="none" stroke="#383838" stroke-width="1.3" stroke-linecap="round" stroke-linejoin="round"/></svg>
<svg class="i" style="left:85px;top:380px" width="13" height="13" viewBox="0 0 13 13"><rect x=".5" y=".5" width="12" height="12" fill="#fff" stroke="#333" stroke-width="1" shape-rendering="crispEdges"/></svg>
<svg class="i" style="left:219px;top:380px" width="13" height="13" viewBox="0 0 13 13"><rect x=".5" y=".5" width="12" height="12" fill="#fff" stroke="#333" stroke-width="1" shape-rendering="crispEdges"/><polyline points="2.4,6.6 5,9.35 10.6,3.4" fill="none" stroke="#383838" stroke-width="1.3" stroke-linecap="round" stroke-linejoin="round"/></svg>
<svg class="i" style="left:85px;top:404px" width="13" height="13" viewBox="0 0 13 13"><rect x=".5" y=".5" width="12" height="12" fill="#fff" stroke="#333" stroke-width="1" shape-rendering="crispEdges"/></svg>
<svg class="i" style="left:219px;top:404px" width="13" height="13" viewBox="0 0 13 13"><rect x=".5" y=".5" width="12" height="12" fill="#fff" stroke="#333" stroke-width="1" shape-rendering="crispEdges"/><polyline points="2.4,6.6 5,9.35 10.6,3.4" fill="none" stroke="#383838" stroke-width="1.3" stroke-linecap="round" stroke-linejoin="round"/></svg>
<svg class="i" style="left:85px;top:428px" width="13" height="13" viewBox="0 0 13 13"><rect x=".5" y=".5" width="12" height="12" fill="#fff" stroke="#333" stroke-width="1" shape-rendering="crispEdges"/></svg>
<svg class="i" style="left:219px;top:428px" width="13" height="13" viewBox="0 0 13 13"><rect x=".5" y=".5" width="12" height="12" fill="#fff" stroke="#333" stroke-width="1" shape-rendering="crispEdges"/><polyline points="2.4,6.6 5,9.35 10.6,3.4" fill="none" stroke="#383838" stroke-width="1.3" stroke-linecap="round" stroke-linejoin="round"/></svg>
<svg class="i" style="left:85px;top:452px" width="13" height="13" viewBox="0 0 13 13"><rect x=".5" y=".5" width="12" height="12" fill="#fff" stroke="#333" stroke-width="1" shape-rendering="crispEdges"/></svg>
<svg class="i" style="left:219px;top:452px" width="13" height="13" viewBox="0 0 13 13"><rect x=".5" y=".5" width="12" height="12" fill="#fff" stroke="#333" stroke-width="1" shape-rendering="crispEdges"/><polyline points="2.4,6.6 5,9.35 10.6,3.4" fill="none" stroke="#383838" stroke-width="1.3" stroke-linecap="round" stroke-linejoin="round"/></svg>
<svg class="i" style="left:85px;top:476px" width="13" height="13" viewBox="0 0 13 13"><rect x=".5" y=".5" width="12" height="12" fill="#fff" stroke="#333" stroke-width="1" shape-rendering="crispEdges"/></svg>
<svg class="i" style="left:219px;top:476px" width="13" height="13" viewBox="0 0 13 13"><rect x=".5" y=".5" width="12" height="12" fill="#fff" stroke="#333" stroke-width="1" shape-rendering="crispEdges"/><polyline points="2.4,6.6 5,9.35 10.6,3.4" fill="none" stroke="#383838" stroke-width="1.3" stroke-linecap="round" stroke-linejoin="round"/></svg>
<div style="left:1261px;top:258px;width:16px;height:240px;background:#F0F0F0;"></div>
<div style="left:1261px;top:275px;width:15px;height:11px;background:#CDCDCD;"></div>
<svg class="i" style="left:1265px;top:264px" width="7" height="6" viewBox="0 0 7 6" shape-rendering="crispEdges"><path fill="#505050" d="M3 0h1v1h-1zM2 1h3v1h-3zM1 2h5v1h-5zM0 3h3v1h-3zM4 3h3v1h-3zM0 4h2v1h-2zM5 4h2v1h-2zM0 5h1v1h-1zM6 5h1v1h-1z"/></svg>
<div style="left:1261px;top:481px;width:15px;height:17px;background:#DADADA;"></div>
<svg class="i" style="left:1265px;top:487px" width="7" height="6" viewBox="0 0 7 6" shape-rendering="crispEdges"><path fill="#000000" d="M3 5h1v1h-1zM2 4h3v1h-3zM1 3h5v1h-5zM0 2h3v1h-3zM4 2h3v1h-3zM0 1h2v1h-2zM5 1h2v1h-2zM0 0h1v1h-1zM6 0h1v1h-1z"/></svg>
<div style="left:194px;top:505px;width:37px;height:20px;background:#FFFFFF;border:1px solid #7A7A7A;box-sizing:border-box;"></div>
<span class="t" style="left:17.08px;top:8px;font-size:14px;color:#000000;letter-spacing:-0.429px;">Versioning</span>
<span class="t" style="left:23.13px;top:35px;font-size:12px;color:#000000;letter-spacing:-0.590px;">Workflow/Report Generation</span>
<span class="t" style="left:22.40px;top:204px;font-size:12px;color:#000000;letter-spacing:-0.640px;">Selection of Versioning Reports</span>
<span class="t" style="left:16.00px;top:505px;font-size:12px;color:#000000;letter-spacing:-0.364px;">Batch versioning log length:</span>
<span class="t" style="left:221.45px;top:505px;font-size:12px;color:#000000;">2</span>
<span class="t" style="left:53.80px;top:55px;font-size:12px;color:#0B6777;letter-spacing:0.600px;-webkit-text-stroke:0.25px #0B6777;">No.</span>
<span class="t" style="left:148.75px;top:55px;font-size:12px;color:#0B6777;letter-spacing:0.308px;-webkit-text-stroke:0.25px #0B6777;">Name</span>
<span class="t" style="left:249.60px;top:55px;font-size:12px;color:#0B6777;letter-spacing:0.019px;-webkit-text-stroke:0.25px #0B6777;">Name [English]</span>
<span class="t" style="left:378.75px;top:55px;font-size:12px;color:#0B6777;letter-spacing:0.021px;-webkit-text-stroke:0.25px #0B6777;">Name [German]</span>
<span class="t" style="left:508.72px;top:55px;font-size:12px;color:#0B6777;letter-spacing:0.133px;-webkit-text-stroke:0.25px #0B6777;">Initial Status</span>
<span class="t" style="left:626.38px;top:55px;font-size:12px;color:#0B6777;letter-spacing:0.109px;-webkit-text-stroke:0.25px #0B6777;">Valid for</span>
<span class="t" style="left:718.40px;top:55px;font-size:12px;color:#0B6777;letter-spacing:-0.083px;-webkit-text-stroke:0.25px #0B6777;">Subsequent ...</span>
<span class="t" style="left:841.84px;top:55px;font-size:12px;color:#0B6777;letter-spacing:-0.205px;-webkit-text-stroke:0.25px #0B6777;">Create version reports</span>
<span class="t" style="left:1020.74px;top:55px;font-size:12px;color:#0B6777;letter-spacing:-0.234px;-webkit-text-stroke:0.25px #0B6777;">Check exchange rates</span>
<span class="t" style="left:1197.50px;top:55px;font-size:12px;color:#0B6777;letter-spacing:-0.009px;-webkit-text-stroke:0.25px #0B6777;">Rights</span>
<span class="t" style="left:104.40px;top:77px;font-size:12px;color:#0C0C0C;">1</span>
<span class="t" style="left:123.83px;top:77px;font-size:12px;color:#7A7A7A;letter-spacing:-0.143px;font-style:italic;">in process</span>
<span class="t" style="left:244.55px;top:77px;font-size:12px;color:#0C0C0C;letter-spacing:-0.101px;">in process</span>
<span class="t" style="left:374.55px;top:77px;font-size:12px;color:#0C0C0C;letter-spacing:0.037px;">in Bearbeitung</span>
<span class="t" style="left:616.13px;top:77px;font-size:12px;color:#0C0C0C;letter-spacing:-0.166px;">Aktueller Be...</span>
<span class="t" style="left:718.85px;top:77px;font-size:12px;color:#0C0C0C;letter-spacing:-0.164px;">2: calculated, 1: i...</span>
<span class="t" style="left:1214.87px;top:78px;font-size:12px;color:#0C0C0C;letter-spacing:-0.137px;-webkit-text-stroke:0.3px #0C0C0C;">...</span>
<span class="t" style="left:103.85px;top:101px;font-size:12px;color:#0C0C0C;">2</span>
<span class="t" style="left:124.43px;top:101px;font-size:12px;color:#7A7A7A;letter-spacing:-0.088px;font-style:italic;">calculated</span>
<span class="t" style="left:245.15px;top:101px;font-size:12px;color:#0C0C0C;letter-spacing:0.030px;">calculated</span>
<span class="t" style="left:374.90px;top:101px;font-size:12px;color:#0C0C0C;letter-spacing:0.093px;">kalkuliert</span>
<span class="t" style="left:616.13px;top:101px;font-size:12px;color:#0C0C0C;letter-spacing:-0.161px;">Aktueller Bearb...</span>
<span class="t" style="left:718.85px;top:101px;font-size:12px;color:#0C0C0C;letter-spacing:-0.164px;">2: calculated, 1: i...</span>
<span class="t" style="left:1214.87px;top:102px;font-size:12px;color:#0C0C0C;letter-spacing:-0.137px;-webkit-text-stroke:0.3px #0C0C0C;">...</span>
<span class="t" style="left:104.01px;top:125px;font-size:12px;color:#0C0C0C;">3</span>
<span class="t" style="left:123.61px;top:125px;font-size:12px;color:#7A7A7A;letter-spacing:0.092px;font-style:italic;">finale Prüfung</span>
<span class="t" style="left:245.51px;top:125px;font-size:12px;color:#7A7A7A;letter-spacing:0.092px;font-style:italic;">finale Prüfung</span>
<span class="t" style="left:374.87px;top:125px;font-size:12px;color:#0C0C0C;letter-spacing:0.100px;">finale Prüfung</span>
<span class="t" style="left:616.13px;top:125px;font-size:12px;color:#0C0C0C;letter-spacing:-0.161px;">Aktueller Bearb...</span>
<span class="t" style="left:718.85px;top:125px;font-size:12px;color:#0C0C0C;letter-spacing:-0.164px;">2: calculated, 1: i...</span>
<span class="t" style="left:1214.87px;top:126px;font-size:12px;color:#0C0C0C;letter-spacing:-0.137px;-webkit-text-stroke:0.3px #0C0C0C;">...</span>
<span class="t" style="left:103.85px;top:149px;font-size:12px;color:#0C0C0C;">4</span>
<span class="t" style="left:123.80px;top:149px;font-size:12px;color:#7A7A7A;letter-spacing:-0.436px;font-style:italic;">released</span>
<span class="t" style="left:245.20px;top:149px;font-size:12px;color:#0C0C0C;letter-spacing:-0.461px;">released</span>
<span class="t" style="left:374.87px;top:149px;font-size:12px;color:#0C0C0C;letter-spacing:-0.044px;">freigegeben</span>
<span class="t" style="left:616.13px;top:149px;font-size:12px;color:#0C0C0C;letter-spacing:-0.161px;">Aktueller Bearb...</span>
<span class="t" style="left:718.85px;top:149px;font-size:12px;color:#0C0C0C;letter-spacing:-0.164px;">2: calculated, 1: i...</span>
<span class="t" style="left:1214.87px;top:150px;font-size:12px;color:#0C0C0C;letter-spacing:-0.137px;-webkit-text-stroke:0.3px #0C0C0C;">...</span>
<span class="t" style="left:104.05px;top:173px;font-size:12px;color:#0C0C0C;">5</span>
<span class="t" style="left:123.80px;top:173px;font-size:12px;color:#7A7A7A;letter-spacing:-0.096px;font-style:italic;">archived</span>
<span class="t" style="left:245.42px;top:173px;font-size:12px;color:#0C0C0C;letter-spacing:-0.141px;">archived</span>
<span class="t" style="left:375.02px;top:173px;font-size:12px;color:#0C0C0C;letter-spacing:0.040px;">archiviert</span>
<span class="t" style="left:616.13px;top:173px;font-size:12px;color:#0C0C0C;letter-spacing:-0.161px;">Aktueller Bearb...</span>
<span class="t" style="left:718.85px;top:173px;font-size:12px;color:#0C0C0C;letter-spacing:-0.164px;">2: calculated, 1: i...</span>
<span class="t" style="left:1214.87px;top:174px;font-size:12px;color:#0C0C0C;letter-spacing:-0.137px;-webkit-text-stroke:0.3px #0C0C0C;">...</span>
<span class="t" style="left:25.80px;top:231px;font-size:12px;color:#6F9199;letter-spacing:0.025px;">Drag a column header here to group by this column.</span>
<span class="t" style="left:62.38px;top:259px;font-size:12px;color:#0B6777;letter-spacing:0.139px;-webkit-text-stroke:0.25px #0B6777;">Active</span>
<span class="t" style="left:147.60px;top:259px;font-size:12px;color:#0B6777;letter-spacing:-0.013px;-webkit-text-stroke:0.25px #0B6777;">Execute for Sub-projects</span>
<span class="t" style="left:330.40px;top:259px;font-size:12px;color:#0B6777;letter-spacing:-0.030px;-webkit-text-stroke:0.25px #0B6777;">Report Name</span>
<span class="t" style="left:453.54px;top:259px;font-size:12px;color:#0B6777;letter-spacing:-0.180px;-webkit-text-stroke:0.25px #0B6777;">Category</span>
<span class="t" style="left:554.00px;top:259px;font-size:12px;color:#0B6777;letter-spacing:-0.114px;-webkit-text-stroke:0.25px #0B6777;">Language</span>
<span class="t" style="left:658.90px;top:259px;font-size:12px;color:#0B6777;letter-spacing:0.144px;-webkit-text-stroke:0.25px #0B6777;">Description</span>
<span class="t" style="left:324.18px;top:281px;font-size:12px;color:#0C0C0C;letter-spacing:-0.248px;">ABC-Analyse</span>
<span class="t" style="left:477.28px;top:281px;font-size:12px;color:#0C0C0C;letter-spacing:0.150px;">Table</span>
<span class="t" style="left:547.05px;top:281px;font-size:12px;color:#0C0C0C;letter-spacing:0.049px;">de</span>
<span class="t" style="left:324.18px;top:305px;font-size:12px;color:#0C0C0C;letter-spacing:-0.340px;">ABC-Analysis_en</span>
<span class="t" style="left:477.28px;top:305px;font-size:12px;color:#0C0C0C;letter-spacing:0.150px;">Table</span>
<span class="t" style="left:547.05px;top:305px;font-size:12px;color:#0C0C0C;letter-spacing:-0.522px;">en</span>
<span class="t" style="left:324.18px;top:329px;font-size:12px;color:#0C0C0C;letter-spacing:-0.212px;">ABC-Analysis</span>
<span class="t" style="left:477.28px;top:329px;font-size:12px;color:#0C0C0C;letter-spacing:0.150px;">Table</span>
<span class="t" style="left:547.05px;top:329px;font-size:12px;color:#0C0C0C;letter-spacing:-0.522px;">en</span>
<span class="t" style="left:323.30px;top:353px;font-size:12px;color:#0C0C0C;">Kopie von ABC-An...</span>
<span class="t" style="left:477.28px;top:353px;font-size:12px;color:#0C0C0C;letter-spacing:0.150px;">Table</span>
<span class="t" style="left:547.05px;top:353px;font-size:12px;color:#0C0C0C;letter-spacing:0.049px;">de</span>
<span class="t" style="left:323.30px;top:377px;font-size:12px;color:#0C0C0C;">Kopie von ABC-An...</span>
<span class="t" style="left:477.28px;top:377px;font-size:12px;color:#0C0C0C;letter-spacing:0.150px;">Table</span>
<span class="t" style="left:547.05px;top:377px;font-size:12px;color:#0C0C0C;letter-spacing:-0.522px;">en</span>
<span class="t" style="left:324.18px;top:401px;font-size:12px;color:#0C0C0C;letter-spacing:-0.362px;">ABC-Analysis01</span>
<span class="t" style="left:477.28px;top:401px;font-size:12px;color:#0C0C0C;letter-spacing:0.150px;">Table</span>
<span class="t" style="left:547.05px;top:401px;font-size:12px;color:#0C0C0C;letter-spacing:-0.522px;">en</span>
<span class="t" style="left:324.18px;top:425px;font-size:12px;color:#0C0C0C;letter-spacing:-0.238px;">ABC-Analyse</span>
<span class="t" style="left:477.28px;top:425px;font-size:12px;color:#0C0C0C;letter-spacing:0.150px;">Table</span>
<span class="t" style="left:547.05px;top:425px;font-size:12px;color:#0C0C0C;letter-spacing:-0.522px;">en</span>
<span class="t" style="left:324.18px;top:449px;font-size:12px;color:#0C0C0C;letter-spacing:-0.357px;">ABC-Analysis01EN</span>
<span class="t" style="left:477.28px;top:449px;font-size:12px;color:#0C0C0C;letter-spacing:0.150px;">Table</span>
<span class="t" style="left:547.05px;top:449px;font-size:12px;color:#0C0C0C;letter-spacing:-0.522px;">en</span>
<span class="t" style="left:324.18px;top:473px;font-size:12px;color:#0C0C0C;letter-spacing:-0.296px;">ABC-Analyse_Chart</span>
<span class="t" style="left:477.14px;top:473px;font-size:12px;color:#0C0C0C;letter-spacing:-0.126px;">Chart</span>
<span class="t" style="left:547.05px;top:473px;font-size:12px;color:#0C0C0C;letter-spacing:0.049px;">de</span>
</body></html>
